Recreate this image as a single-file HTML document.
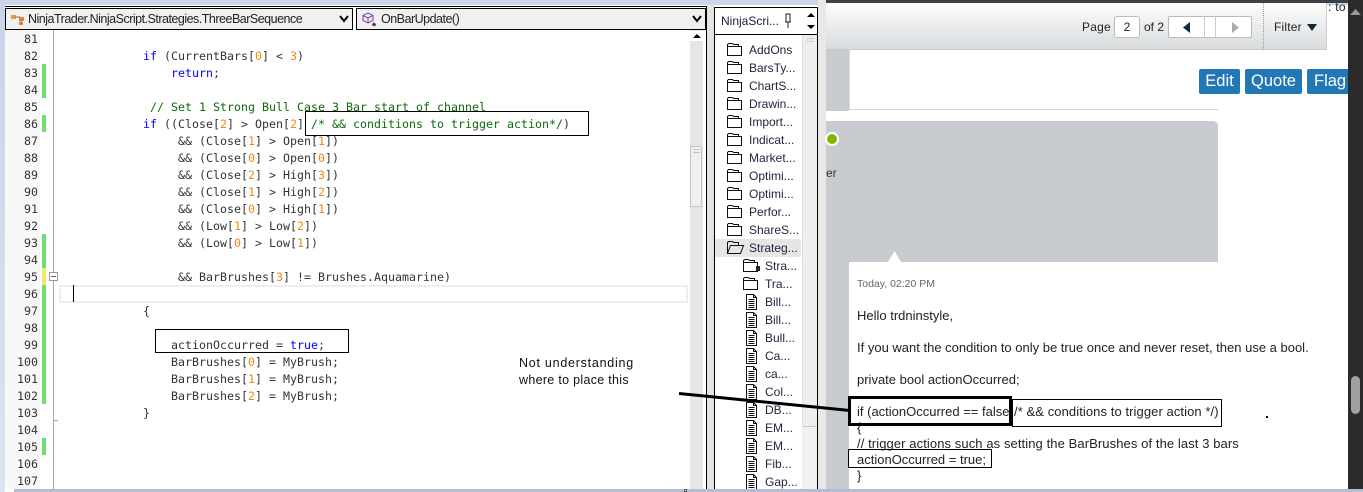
<!DOCTYPE html>
<html><head><meta charset="utf-8"><style>
html,body{margin:0;padding:0;background:#fff}
#r{position:relative;width:1363px;height:492px;overflow:hidden;background:#fff;font-family:"Liberation Sans",sans-serif}
#r div,#r pre,#r svg{position:absolute;margin:0}
.t{white-space:nowrap;font-size:12px;color:#222;line-height:14px}
.p{font-size:13px;top:0;color:#222}
pre{font-family:"DejaVu Sans Mono",monospace;font-size:11.63px;line-height:17px;color:#333}
i{font-style:normal}.k{color:#00f}.n{color:#ee8a12}.c{color:#0b6a0b}
.dd{background:#f0f0f0;border:1px solid #000;height:20px;box-sizing:content-box;font-size:12.5px;letter-spacing:-.5px;line-height:21px;color:#222;white-space:nowrap}
.tr{font-size:12px;color:#2a2040;white-space:nowrap;line-height:14px}
.btn{background:#2277b5;color:#fff;font-size:16.5px;line-height:25px;height:25px;text-align:center;border-radius:2px}
</style></head><body><div id="r">
<div style="left:0;top:0;width:1363px;height:5px;background:#ccd6e8"></div>
<div style="left:0;top:0;width:5px;height:492px;background:linear-gradient(#c9d4e8,#dbe4f1)"></div>
<div style="left:5px;top:6px;width:702px;height:483px;background:#fff;border-top:1px solid #000;border-right:1px solid #000;box-sizing:border-box"></div>
<div class="dd" style="left:5px;top:8px;width:346px"><span style="margin-left:22px">NinjaTrader.NinjaScript.Strategies.ThreeBarSequence</span></div>
<svg style="left:10px;top:12px" width="15" height="14" viewBox="0 0 15 14"><path d="M1 3h5v4H1z" fill="#e09a50"/><path d="M9 5h5v4H9zM9 10h4v3H9z" fill="#d58a3c"/><path d="M5 5h5M11 8v3" stroke="#a86a28" fill="none"/></svg>
<svg style="left:339px;top:15px" width="10" height="8" viewBox="0 0 10 8"><path d="M1 1l4 5 4-5" fill="none" stroke="#000" stroke-width="2"/></svg>
<div class="dd" style="left:356px;top:8px;width:348px"><span style="margin-left:24px">OnBarUpdate()</span></div>
<svg style="left:362px;top:12px" width="16" height="15" viewBox="0 0 16 15"><path d="M6 1l5 2.500v5L6 11 1 8.500v-5zM1 3.500L6 6l5-2.500M6 6v5" fill="none" stroke="#7a3fb0"/><path d="M12 10l1 1.500 1.500.5-1 1v1.500l-1.500-.7-1.500.7V13l-1-1 1.500-.5z" fill="#444"/></svg>
<svg style="left:692px;top:15px" width="10" height="8" viewBox="0 0 10 8"><path d="M1 1l4 5 4-5" fill="none" stroke="#000" stroke-width="2"/></svg>

<div style="left:5px;top:30px;width:35px;height:459px;background:#f8f8f8"></div>
<div style="left:42px;top:64px;width:4px;height:34px;background:#6fe06f"></div>
<div style="left:42px;top:115px;width:4px;height:17px;background:#6fe06f"></div>
<div style="left:42px;top:234px;width:4px;height:34px;background:#6fe06f"></div>
<div style="left:42px;top:268px;width:4px;height:17px;background:#f7e867"></div>
<div style="left:42px;top:285px;width:4px;height:119px;background:#6fe06f"></div>
<div style="left:42px;top:438px;width:4px;height:17px;background:#6fe06f"></div>
<div style="left:53px;top:30px;width:1px;height:459px;background:#a5a5a5"></div>
<div style="left:49px;top:272px;width:7px;height:7px;border:1px solid #999;background:#fff"></div>
<div style="left:51px;top:276px;width:5px;height:1px;background:#666"></div>
<div style="left:53px;top:420px;width:5px;height:1px;background:#a5a5a5"></div>
<div style="left:59px;top:285px;width:625px;height:14px;border:2px solid #eee"></div>
<div style="left:73px;top:285px;width:1px;height:17px;background:#000"></div>

<pre style="left:5px;top:31px;width:33px;text-align:right;color:#333">81
82
83
84
85
86
87
88
89
90
91
92
93
94
95
96
97
98
99
100
101
102
103
104
105
106
107</pre>
<pre style="left:59px;top:31px">

            <i class="k">if</i> (CurrentBars[<i class="n">0</i>] &lt; <i class="n">3</i>)
                <i class="k">return</i>;

             <i class="c">// Set 1 Strong Bull Case 3 Bar start of channel</i>
            <i class="k">if</i> ((Close[<i class="n">2</i>] &gt; Open[<i class="n">2</i>]
                 &amp;&amp; (Close[<i class="n">1</i>] &gt; Open[<i class="n">1</i>])
                 &amp;&amp; (Close[<i class="n">0</i>] &gt; Open[<i class="n">0</i>])
                 &amp;&amp; (Close[<i class="n">2</i>] &gt; High[<i class="n">3</i>])
                 &amp;&amp; (Close[<i class="n">1</i>] &gt; High[<i class="n">2</i>])
                 &amp;&amp; (Close[<i class="n">0</i>] &gt; High[<i class="n">1</i>])
                 &amp;&amp; (Low[<i class="n">1</i>] &gt; Low[<i class="n">2</i>])
                 &amp;&amp; (Low[<i class="n">0</i>] &gt; Low[<i class="n">1</i>])

                 &amp;&amp; BarBrushes[<i class="n">3</i>] != Brushes.Aquamarine)

            {

                actionOccurred = <i class="k">true</i>;
                BarBrushes[<i class="n">0</i>] = MyBrush;
                BarBrushes[<i class="n">1</i>] = MyBrush;
                BarBrushes[<i class="n">2</i>] = MyBrush;
            }</pre>
<div style="left:305px;top:111px;width:282px;height:23px;border:1px solid #000;background:#fff"></div>
<pre style="left:311px;top:116px"><i class="c">/* &amp;&amp; conditions to trigger action*/</i>)</pre>
<div style="left:155px;top:329px;width:192px;height:22px;border:1px solid #000"></div>
<div class="t" style="left:519px;top:356px;font-size:12.5px;letter-spacing:.75px;color:#111">Not understanding</div>
<div class="t" style="left:519px;top:373px;font-size:12.5px;letter-spacing:.3px;color:#111">where to place this</div>

<div style="left:690px;top:30px;width:13px;height:459px;background:#e6e6e6"></div>
<div style="left:690px;top:31px;width:13px;height:10px;background:#fff"></div>
<svg style="left:692px;top:33px" width="10" height="6"><path d="M1 5l4-4 4 4z" fill="#000"/></svg>
<div style="left:690px;top:146px;width:12px;height:61px;background:#f0f0f0;border:1px solid #c4c4c4;box-sizing:border-box"></div>
<div style="left:693px;top:149px;width:7px;height:1px;background:#c4c4c4"></div>
<div style="left:693px;top:152px;width:7px;height:1px;background:#c4c4c4"></div>

<div style="left:707px;top:5px;width:7px;height:484px;background:#e4e4e4"></div>
<div style="left:714px;top:7px;width:104px;height:482px;background:#fff;border-left:1px solid #000;border-right:1px solid #000;border-top:1px solid #000;box-sizing:border-box"></div>
<div style="left:714px;top:34px;width:104px;height:1px;background:#000"></div>
<div class="t" style="left:721px;top:14px;color:#1f1a3a">NinjaScri...</div>
<svg style="left:783px;top:13px" width="10" height="16" viewBox="0 0 10 16"><path d="M3 1h4v8H3zM2 9h6M5 9v6" fill="none" stroke="#222"/></svg>
<svg style="left:805px;top:11px" width="12" height="20" viewBox="0 0 12 20"><path d="M2 6l4-4 4 4zM2 14l4 4 4-4z" fill="#000"/></svg>
<div style="left:802px;top:35px;width:15px;height:454px;background:#f0f0f0"></div>
<div style="left:802px;top:35px;width:15px;height:392px;background:#eee;border-bottom:1px solid #c8c8c8;border-left:1px solid #ddd;box-sizing:border-box"></div>
<div style="left:806px;top:38px;width:8px;height:1px;background:#ccc"></div>
<div style="left:806px;top:41px;width:8px;height:1px;background:#ccc"></div>
<div style="left:715px;top:239px;width:86px;height:18px;background:#e6e6e6"></div>

<svg style="left:715px;top:40px" width="86" height="449" viewBox="0 0 86 449" fill="none" stroke="#111">
<defs><path id="f" d="M.5 3.500v-2l1-1h4l1 1h5v2h3v9h-14zM.5 3.500h11" fill="#fff"/>
<path id="p" d="M1.500 .5h7l3 3v12h-10zM8.500 .5v3h3M3.500 5.500h6M3.500 7.500h6M3.500 9.500h6M3.500 11.500h6M3.500 13.500h6" fill="#fff"/></defs>
<use href="#f" x="12" y="3"/><use href="#f" x="12" y="21"/><use href="#f" x="12" y="39"/><use href="#f" x="12" y="57"/><use href="#f" x="12" y="75"/><use href="#f" x="12" y="93"/><use href="#f" x="12" y="111"/><use href="#f" x="12" y="129"/><use href="#f" x="12" y="147"/><use href="#f" x="12" y="165"/><use href="#f" x="12" y="183"/>
<path d="M12.500 213.500v-11l1-1h4l1 1h5v3M12.500 213.500l3-8h13l-3 8z" fill="#e6e6e6"/>
<use href="#f" x="28" y="219"/><rect x="41" y="226" width="4" height="5" fill="#222" stroke="none"/><use href="#f" x="28" y="237"/>
<use href="#p" x="30" y="254"/><use href="#p" x="30" y="272"/><use href="#p" x="30" y="290"/><use href="#p" x="30" y="308"/><use href="#p" x="30" y="326"/><use href="#p" x="30" y="344"/><use href="#p" x="30" y="362"/><use href="#p" x="30" y="380"/><use href="#p" x="30" y="398"/><use href="#p" x="30" y="416"/><use href="#p" x="30" y="434"/>
</svg>
<div class="tr" style="left:749px;top:43px">AddOns</div>
<div class="tr" style="left:749px;top:61px">BarsTy...</div>
<div class="tr" style="left:749px;top:79px">ChartS...</div>
<div class="tr" style="left:749px;top:97px">Drawin...</div>
<div class="tr" style="left:749px;top:115px">Import...</div>
<div class="tr" style="left:749px;top:133px">Indicat...</div>
<div class="tr" style="left:749px;top:151px">Market...</div>
<div class="tr" style="left:749px;top:169px">Optimi...</div>
<div class="tr" style="left:749px;top:187px">Optimi...</div>
<div class="tr" style="left:749px;top:205px">Perfor...</div>
<div class="tr" style="left:749px;top:223px">ShareS...</div>
<div class="tr" style="left:749px;top:241px">Strateg...</div>
<div class="tr" style="left:765px;top:259px">Stra...</div>
<div class="tr" style="left:765px;top:277px">Tra...</div>
<div class="tr" style="left:765px;top:295px">Bill...</div>
<div class="tr" style="left:765px;top:313px">Bill...</div>
<div class="tr" style="left:765px;top:331px">Bull...</div>
<div class="tr" style="left:765px;top:349px">Ca...</div>
<div class="tr" style="left:765px;top:367px">ca...</div>
<div class="tr" style="left:765px;top:385px">Col...</div>
<div class="tr" style="left:765px;top:403px">DB...</div>
<div class="tr" style="left:765px;top:421px">EM...</div>
<div class="tr" style="left:765px;top:439px">EM...</div>
<div class="tr" style="left:765px;top:457px">Fib...</div>
<div class="tr" style="left:765px;top:475px">Gap...</div>

<div style="left:818px;top:0;width:8px;height:489px;background:#e8e8e8"></div>
<div style="left:826px;top:0;width:522px;height:3px;background:#3c4048"></div>
<div style="left:826px;top:3px;width:501px;height:47px;background:linear-gradient(#fdfdfd,#d8dbdd);border-right:1px solid #ccc;border-bottom:1px solid #c8ccd0;box-sizing:border-box"></div>
<div class="t" style="left:1082px;top:20px;letter-spacing:.2px">Page</div>
<div class="t" style="left:1114px;top:16px;width:24px;height:20px;border:1px solid #bbb;border-radius:3px;background:#fff;text-align:center;line-height:20px">2</div>
<div class="t" style="left:1144px;top:20px">of 2</div>
<div style="left:1168px;top:16px;width:82px;height:20px;border:1px solid #bbb;border-radius:2px;background:#fff"></div>
<div style="left:1204px;top:16px;width:1px;height:22px;background:#ccc"></div>
<div style="left:1215px;top:16px;width:1px;height:22px;background:#ccc"></div>
<svg style="left:1183px;top:22px" width="8" height="11"><path d="M7 0v11L0 5.500z" fill="#0e2a3a"/></svg>
<svg style="left:1231px;top:22px" width="8" height="11"><path d="M1 0v11l7-5.500z" fill="#aaa"/></svg>
<div style="left:1263px;top:3px;width:0;height:47px;border-left:1px dotted #999"></div>
<div class="t" style="left:1274px;top:20px;letter-spacing:.2px">Filter</div>
<svg style="left:1307px;top:24px" width="10" height="7"><path d="M0 0h10L5 7z" fill="#0e2a3a"/></svg>
<div class="t" style="left:1328px;top:0;letter-spacing:.3px">: to</div>

<div style="left:826px;top:50px;width:23px;height:61px;background:#c8ccd0"></div>
<div style="left:849px;top:50px;width:369px;height:61px;background:#fff"></div>
<div style="left:849px;top:50px;width:1px;height:59px;background:#d8dbdd"></div>
<div style="left:849px;top:109px;width:369px;height:1px;background:#d5d5d5"></div>
<div style="left:826px;top:121px;width:392px;height:141px;background:#c8ccd0;border-radius:0 5px 0 0"></div>
<div style="left:826px;top:262px;width:23px;height:227px;background:#c8ccd0"></div>
<div style="left:849px;top:262px;width:369px;height:227px;background:#fff;border-radius:3px 0 0 0"></div>
<svg style="left:888px;top:251px" width="13" height="11"><path d="M0 11L6.500 0 13 11z" fill="#fff"/></svg>
<div style="left:825px;top:132px;width:10px;height:10px;background:#7fb800;border:2px solid #fff;border-radius:50%"></div>
<div class="t" style="left:826px;top:166px;color:#333">er</div>
<div class="btn" style="left:1199px;top:69px;width:41px">Edit</div>
<div class="btn" style="left:1245px;top:69px;width:57px">Quote</div>
<div class="btn" style="left:1307px;top:69px;width:41px;text-align:left;text-indent:7px;border-radius:2px 0 0 2px">Flag</div>

<div class="t" style="left:857px;top:277px;font-size:10.5px;color:#666">Today, 02:20 PM</div>
<div class="t p" style="left:857px;top:309px">Hello trdninstyle,</div>
<div class="t p" style="left:857px;top:341px">If you want the condition to only be true once and never reset, then use a bool.</div>
<div class="t p" style="left:857px;top:373px">private bool actionOccurred;</div>
<div class="t p" style="left:857px;top:405px">if (actionOccurred == false</div>
<div class="t p" style="left:1014px;top:405px;letter-spacing:.08px">/* &amp;&amp; conditions to trigger action */)</div>
<div class="t p" style="left:857px;top:421px">{</div>
<div class="t p" style="left:857px;top:437px;letter-spacing:.09px">// trigger actions such as setting the BarBrushes of the last 3 bars</div>
<div class="t p" style="left:857px;top:453px">actionOccurred = true;</div>
<div class="t p" style="left:857px;top:469px">}</div>
<div style="left:1012px;top:399px;width:208px;height:26px;border:1px solid #000"></div>
<div style="left:848px;top:396px;width:158px;height:24px;border:3px solid #000"></div>
<div style="left:848px;top:449px;width:142px;height:17px;border:1px solid #000"></div>
<div style="left:1266px;top:416px;width:2px;height:2px;background:#000"></div>
<svg style="left:679px;top:390px" width="172" height="24"><path d="M0 3.500L171 20.500" stroke="#000" stroke-width="3" fill="none"/></svg>

<div style="left:1348px;top:0;width:15px;height:489px;background:#2b2b2b"></div>
<svg style="left:1350px;top:9px" width="11" height="6"><path d="M0 6L5.500 0 11 6z" fill="#999"/></svg>
<div style="left:1351px;top:376px;width:9px;height:38px;background:#a0a0a0;border-radius:5px"></div>
<div style="left:14px;top:489px;width:1349px;height:3px;background:#b3bed4"></div>
<div style="left:684px;top:489px;width:3px;height:3px;background:#fff;border:1px solid #555;box-sizing:border-box"></div>
</div></body></html>
